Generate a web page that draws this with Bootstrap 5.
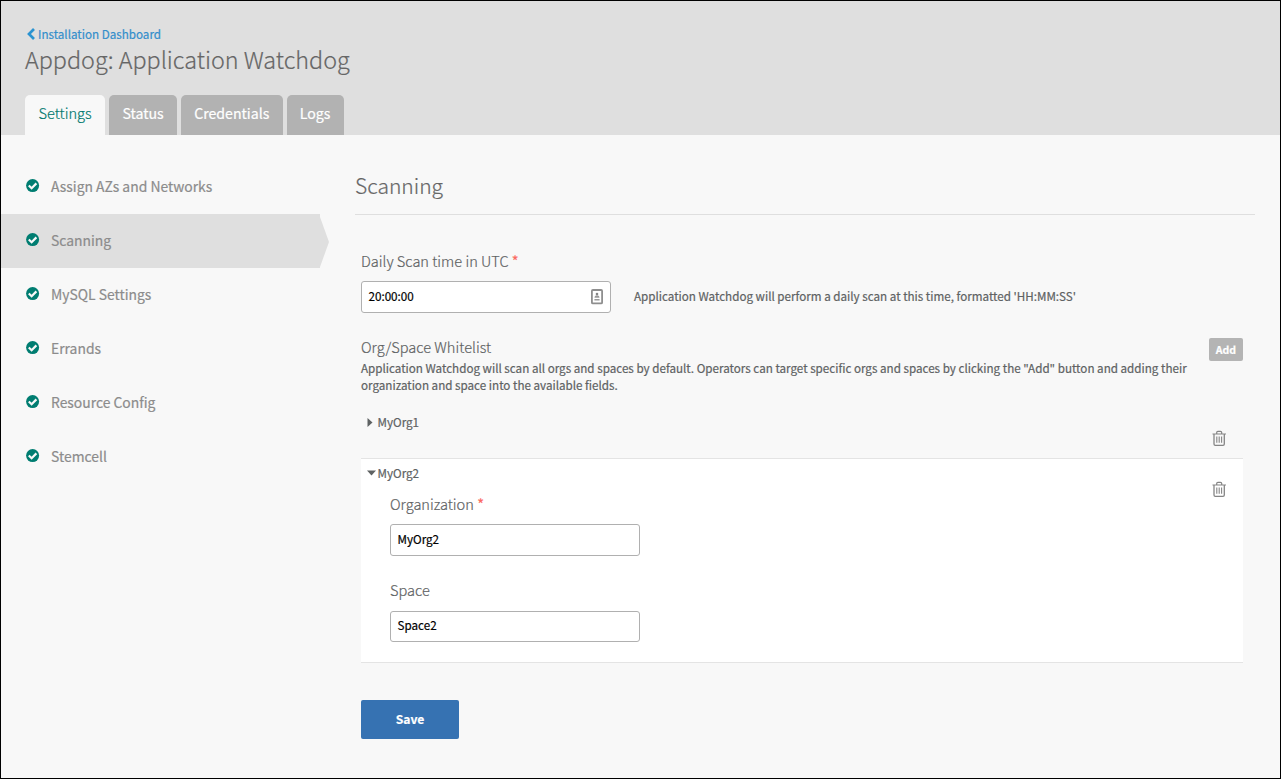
<!DOCTYPE html>
<html lang="en">
<head>
<meta charset="utf-8">
<meta name="viewport" content="width=device-width, initial-scale=1">
<title>Appdog: Application Watchdog</title>
<link href="https://cdn.jsdelivr.net/npm/bootstrap@5.3.0/dist/css/bootstrap.min.css" rel="stylesheet">
<script src="https://cdn.jsdelivr.net/npm/bootstrap@5.3.0/dist/js/bootstrap.bundle.min.js" defer></script>
<style>
  body { font-family: "Noto Sans CJK SC", "Source Sans Pro", sans-serif; font-size: 11.65px; line-height: 17px; color: #5e6263; background: #f8f8f8; -webkit-text-stroke: .2px currentColor; }
  .app-frame { height: 779px; border: 1px solid #000; }
  .app-header { height: 134px; padding: 24px 24px 0; background: #dfdfdf; }
  .back-link { height: 18px; line-height: 18px; color: #338ecb; padding-left: 1.6px; }
  .back-link svg { margin-right: .4px; }
  .app-title { font-size: 23.35px; font-weight: 300; line-height: 32px; color: #666; height: 32px; }
  .app-tabs { gap: 4px; margin-top: 20px; border: 0; }
  .app-tabs .nav-link { height: 40px; padding: 0 13.2px; border: 0; border-radius: 5px 5px 0 0; font-size: 14.15px; line-height: 36px; color: #fff; background: #b2b2b2; }
  .app-tabs .nav-link.active { padding: 0 13.6px; font-size: 14.6px; font-weight: 300; color: #00786e; background: #f8f8f8; }
  .side-nav { width: 328px; padding-top: 25px; }
  .side-nav .nav-link { height: 54px; padding: 0 0 2px 25px; gap: 11px; font-size: 13.9px; line-height: 20px; color: #8c8c8c; }
  .side-nav .nav-link.active { background: #dfdfdf; clip-path: polygon(0 0, 319px 0, 319px 3px, 328px 28px, 319px 53px, 319px 54px, 0 54px); }
  .side-nav svg { margin-top: -1px; }
  .settings-pane { width: 900px; margin-left: 26px; padding-top: 35px; }
  .pane-title { font-size: 21px; font-weight: 300; line-height: 30px; color: #666; padding-bottom: 14px; border-bottom: 1px solid #dfdfdf; }
  .pane-form { padding: 36px 12px 0 6px; }
  .field-label { font-size: 14.6px; font-weight: 300; line-height: 20px; color: #5e6263; }
  .req { color: #fb6a62; font-weight: 400; }
  .field-input { width: 250px; height: 32px; margin-top: 10px; padding: 0 7px 2px 6.5px; border: 1px solid #b0b0b0; border-radius: 3px; font-size: 11.65px; line-height: 18px; color: #000; background: #fff; }
  .field-input svg { margin-top: 2px; }
  .field-input.short { height: 31px; margin-top: 11px; padding-bottom: 3px; }
  .field-help { margin: 7px 0 0 23px; }
  .whitelist { margin-top: 24px; }
  .whitelist-help { margin-top: 2px; }
  .btn-add { width: 34px; height: 23px; margin-top: 1px; border-radius: 2px; font-size: 10.5px; font-weight: 700; line-height: 23px; color: #fff; background: #b4b4b4; }
  .org-row { border-top: 1px solid transparent; padding: 5px 17px 0 6px; }
  .org-row.closed { height: 51px; margin-top: 14px; }
  .org-row.open { height: 205px; background: #fff; border-top-color: #e4e4e4; border-bottom: 1px solid #e4e4e4; }
  .org-name { height: 18px; line-height: 18px; }
  .caret-box { width: 10.5px; }
  .org-fields { padding: 12px 0 0 23px; }
  .trash { margin-top: 17px; }
  .btn-save { width: 98px; height: 39px; margin-top: 37px; border-radius: 2px; font-size: 12.1px; font-weight: 700; line-height: 37px; padding: 0 0 2px; color: #fff; background: #3672b2; }
</style>
</head>
<body>
<svg class="d-none" xmlns="http://www.w3.org/2000/svg">
  <symbol id="check" viewBox="0 0 14 14"><circle cx="6.6" cy="6.6" r="6.5" fill="#007d71"/><path d="M2.8 6.5 5.6 9.2l4.8-4.8" fill="none" stroke="#f8f8f8" stroke-width="2.2"/></symbol>
  <symbol id="trash" viewBox="0 0 14 16"><g fill="none" stroke="#858585"><path d="M.5 4h13.500M4.700 3.900V2.500q0-1.200 1.200-1.200h2.600q1.200 0 1.200 1.200v1.400" stroke-width="1.200"/><path d="M2 4v10q0 1.300 1.300 1.300h7.700q1.300 0 1.300-1.300V4" stroke-width="1.300"/><path d="M4.800 6.500v6.200M7.200 6.500v6.200M9.600 6.500v6.200" stroke-width="1.100"/></g></symbol>
</svg>
<div class="app-frame overflow-hidden">
  <header class="app-header">
    <a href="#" class="back-link d-flex align-items-center text-decoration-none"><svg width="11" height="12" viewBox="0 0 11 12"><path d="M7 1 2 6l5 5" fill="none" stroke="#2b93d1" stroke-width="2.7"/></svg>Installation Dashboard</a>
    <h1 class="app-title mb-0">Appdog: Application Watchdog</h1>
    <ul class="nav nav-tabs app-tabs">
      <li class="nav-item"><a class="nav-link active" href="#">Settings</a></li>
      <li class="nav-item"><a class="nav-link" href="#">Status</a></li>
      <li class="nav-item"><a class="nav-link" href="#">Credentials</a></li>
      <li class="nav-item"><a class="nav-link" href="#">Logs</a></li>
    </ul>
  </header>
  <div class="d-flex">
    <nav class="side-nav nav flex-column flex-shrink-0">
      <a class="nav-link d-flex align-items-center" href="#"><svg width="14" height="14"><use href="#check"/></svg>Assign AZs and Networks</a>
      <a class="nav-link active d-flex align-items-center" href="#"><svg width="14" height="14"><use href="#check"/></svg>Scanning</a>
      <a class="nav-link d-flex align-items-center" href="#"><svg width="14" height="14"><use href="#check"/></svg>MySQL Settings</a>
      <a class="nav-link d-flex align-items-center" href="#"><svg width="14" height="14"><use href="#check"/></svg>Errands</a>
      <a class="nav-link d-flex align-items-center" href="#"><svg width="14" height="14"><use href="#check"/></svg>Resource Config</a>
      <a class="nav-link d-flex align-items-center" href="#"><svg width="14" height="14"><use href="#check"/></svg>Stemcell</a>
    </nav>
    <main class="settings-pane">
      <h2 class="pane-title mb-0">Scanning</h2>
      <form class="pane-form">
        <div class="field-label">Daily Scan time in UTC <span class="req">*</span></div>
        <div class="d-flex align-items-center">
          <div class="field-input d-flex align-items-center justify-content-between">20:00:00
            <svg width="12" height="16" viewBox="0 0 12 16"><rect x=".9" y="1" width="10.2" height="13.4" rx="1" fill="#fff" stroke="#8e8e8e" stroke-width="1.8"/><circle cx="6" cy="5" r="1.3" fill="#858585"/><path d="M3.5 8.800q0-2.500 2.500-2.500t2.500 2.500zM3.400 10h5.200v1.600H3.400z" fill="#999"/></svg>
          </div>
          <div class="field-help">Application Watchdog will perform a daily scan at this time, formatted 'HH:MM:SS'</div>
        </div>
        <section class="whitelist">
          <div class="d-flex justify-content-between align-items-start">
            <div>
              <div class="field-label">Org/Space Whitelist</div>
              <p class="mb-0 whitelist-help">Application Watchdog will scan all orgs and spaces by default. Operators can target specific orgs and spaces by clicking the "Add" button and adding their<br>organization and space into the available fields.</p>
            </div>
            <button type="button" class="btn btn-add border-0 p-0 flex-shrink-0">Add</button>
          </div>
          <div class="org-row closed d-flex justify-content-between align-items-start">
            <div class="org-name d-flex align-items-center"><span class="caret-box d-flex"><svg width="6" height="9" viewBox="0 0 6 9"><path d="M.5 0 5.5 4.5.5 9z" fill="#5e6263"/></svg></span>MyOrg1</div>
            <svg class="trash" width="14" height="16"><use href="#trash"/></svg>
          </div>
          <div class="org-row open d-flex justify-content-between align-items-start">
            <div>
              <div class="org-name d-flex align-items-center"><span class="caret-box d-flex"><svg width="9" height="6" viewBox="0 0 9 6"><path d="M0 .5h9L4.5 5.5z" fill="#5e6263"/></svg></span>MyOrg2</div>
              <div class="org-fields">
                <div class="field-label">Organization <span class="req">*</span></div>
                <div class="field-input d-flex align-items-center">MyOrg2</div>
                <div class="field-label mt-4">Space</div>
                <div class="field-input short d-flex align-items-center">Space2</div>
              </div>
            </div>
            <svg class="trash" width="14" height="16"><use href="#trash"/></svg>
          </div>
        </section>
        <button type="button" class="btn btn-save border-0">Save</button>
      </form>
    </main>
  </div>
</div>
</body>
</html>
